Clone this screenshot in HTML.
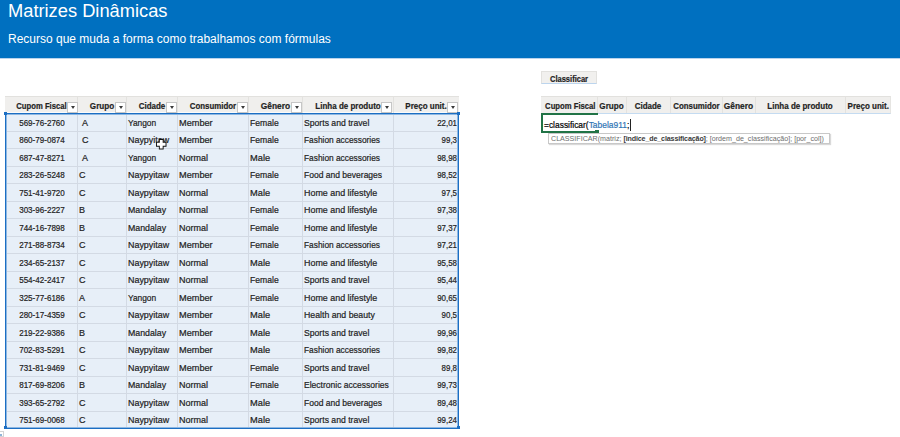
<!DOCTYPE html><html><head><meta charset="utf-8"><style>
html,body{margin:0;padding:0;}
body{width:900px;height:437px;overflow:hidden;background:#fff;position:relative;font-family:"Liberation Sans",sans-serif;}
div,span{position:absolute;box-sizing:border-box;}
.t{white-space:nowrap;color:#222;font-size:9px;line-height:10px;-webkit-text-stroke:0.2px;}
.l{transform-origin:0 0;}
.c{transform-origin:50% 0;text-align:center;}
.r{transform-origin:100% 0;text-align:right;}
.h{font-weight:bold;}
.dd{width:11px;height:11px;background:#fff;border:1px solid #c6c6c6;}
.dd:after{content:"";position:absolute;left:2.5px;top:3px;border-left:2.5px solid transparent;border-right:2.5px solid transparent;border-top:3px solid #3a3a3a;}
</style></head><body>

<div style="left:0;top:0;width:900px;height:58px;background:#0070c0;"></div>
<div style="left:0;top:58px;width:900px;height:1px;background:#b9d3ec;"></div>
<span class="t l" style="left:8px;top:0px;font-size:18.3px;line-height:22px;color:#fff;-webkit-text-stroke:0;">Matrizes Dinâmicas</span>
<span class="t l" style="left:8px;top:32px;font-size:12px;line-height:14px;color:#fff;-webkit-text-stroke:0;">Recurso que muda a forma como trabalhamos com fórmulas</span>
<div style="left:5px;top:96px;width:454px;height:17px;background:#f0efed;border-top:1px solid #e2e1de;border-bottom:1px solid #fafafa;"></div>
<div style="left:77px;top:96px;width:1px;height:17px;background:#e3e2df;"></div>
<div style="left:126px;top:96px;width:1px;height:17px;background:#e3e2df;"></div>
<div style="left:177px;top:96px;width:1px;height:17px;background:#e3e2df;"></div>
<div style="left:248px;top:96px;width:1px;height:17px;background:#e3e2df;"></div>
<div style="left:302px;top:96px;width:1px;height:17px;background:#e3e2df;"></div>
<div style="left:393px;top:96px;width:1px;height:17px;background:#e3e2df;"></div>
<div style="left:5px;top:113px;width:453px;height:315px;background:#e7eff8;"></div>
<div style="left:5px;top:131px;width:453px;height:1px;background:#d3dae4;"></div>
<div style="left:5px;top:148px;width:453px;height:1px;background:#d3dae4;"></div>
<div style="left:5px;top:166px;width:453px;height:1px;background:#d3dae4;"></div>
<div style="left:5px;top:183px;width:453px;height:1px;background:#d3dae4;"></div>
<div style="left:5px;top:201px;width:453px;height:1px;background:#d3dae4;"></div>
<div style="left:5px;top:218px;width:453px;height:1px;background:#d3dae4;"></div>
<div style="left:5px;top:236px;width:453px;height:1px;background:#d3dae4;"></div>
<div style="left:5px;top:253px;width:453px;height:1px;background:#d3dae4;"></div>
<div style="left:5px;top:271px;width:453px;height:1px;background:#d3dae4;"></div>
<div style="left:5px;top:288px;width:453px;height:1px;background:#d3dae4;"></div>
<div style="left:5px;top:306px;width:453px;height:1px;background:#d3dae4;"></div>
<div style="left:5px;top:323px;width:453px;height:1px;background:#d3dae4;"></div>
<div style="left:5px;top:341px;width:453px;height:1px;background:#d3dae4;"></div>
<div style="left:5px;top:358px;width:453px;height:1px;background:#d3dae4;"></div>
<div style="left:5px;top:376px;width:453px;height:1px;background:#d3dae4;"></div>
<div style="left:5px;top:393px;width:453px;height:1px;background:#d3dae4;"></div>
<div style="left:5px;top:411px;width:453px;height:1px;background:#d3dae4;"></div>
<div style="left:77px;top:113px;width:1px;height:315px;background:#d3dae4;"></div>
<div style="left:126px;top:113px;width:1px;height:315px;background:#d3dae4;"></div>
<div style="left:177px;top:113px;width:1px;height:315px;background:#d3dae4;"></div>
<div style="left:248px;top:113px;width:1px;height:315px;background:#d3dae4;"></div>
<div style="left:302px;top:113px;width:1px;height:315px;background:#d3dae4;"></div>
<div style="left:393px;top:113px;width:1px;height:315px;background:#d3dae4;"></div>
<div class="t h c" style="left:5px;top:101px;width:72px;transform:translateX(.5px) scaleX(0.853);">Cupom Fiscal</div>
<div class="dd" style="left:67px;top:102px;"></div>
<div class="t h c" style="left:77px;top:101px;width:49px;transform:translateX(.5px) scaleX(0.9);">Grupo</div>
<div class="dd" style="left:115px;top:102px;"></div>
<div class="t h c" style="left:126px;top:101px;width:51px;transform:translateX(.5px) scaleX(0.887);">Cidade</div>
<div class="dd" style="left:166px;top:102px;"></div>
<div class="t h c" style="left:177px;top:101px;width:71px;transform:translateX(.5px) scaleX(0.875);">Consumidor</div>
<div class="dd" style="left:237px;top:102px;"></div>
<div class="t h c" style="left:248px;top:101px;width:54px;transform:translateX(.5px) scaleX(0.932);">Gênero</div>
<div class="dd" style="left:291px;top:102px;"></div>
<div class="t h c" style="left:302px;top:101px;width:91px;transform:translateX(.5px) scaleX(0.89);">Linha de produto</div>
<div class="dd" style="left:381px;top:102px;"></div>
<div class="t h c" style="left:393px;top:101px;width:65px;transform:translateX(.5px) scaleX(0.889);">Preço unit.</div>
<div class="dd" style="left:447px;top:102px;"></div>
<div class="t c" style="left:6px;top:118px;width:72px;transform:scaleX(0.894);">569-76-2760</div>
<span class="t l" style="left:82px;top:118px;transform:scaleX(1);">A</span>
<span class="t l" style="left:128px;top:118px;transform:scaleX(0.927);">Yangon</span>
<span class="t l" style="left:179px;top:118px;transform:scaleX(1.02);">Member</span>
<span class="t l" style="left:250px;top:118px;transform:scaleX(0.955);">Female</span>
<span class="t l" style="left:304px;top:118px;transform:scaleX(0.96);">Sports and travel</span>
<div class="t r" style="left:393px;top:118px;width:64px;transform:scaleX(0.88);">22,01</div>
<div class="t c" style="left:6px;top:135px;width:72px;transform:scaleX(0.894);">860-79-0874</div>
<span class="t l" style="left:82px;top:135px;transform:scaleX(1);">C</span>
<span class="t l" style="left:128px;top:135px;transform:scaleX(0.99);">Naypyitaw</span>
<span class="t l" style="left:179px;top:135px;transform:scaleX(1.02);">Member</span>
<span class="t l" style="left:250px;top:135px;transform:scaleX(0.955);">Female</span>
<span class="t l" style="left:304px;top:135px;transform:scaleX(0.926);">Fashion accessories</span>
<div class="t r" style="left:393px;top:135px;width:64px;transform:scaleX(0.88);">99,3</div>
<div class="t c" style="left:6px;top:153px;width:72px;transform:scaleX(0.894);">687-47-8271</div>
<span class="t l" style="left:82px;top:153px;transform:scaleX(1);">A</span>
<span class="t l" style="left:128px;top:153px;transform:scaleX(0.927);">Yangon</span>
<span class="t l" style="left:179px;top:153px;transform:scaleX(1.0);">Normal</span>
<span class="t l" style="left:250px;top:153px;transform:scaleX(1.03);">Male</span>
<span class="t l" style="left:304px;top:153px;transform:scaleX(0.926);">Fashion accessories</span>
<div class="t r" style="left:393px;top:153px;width:64px;transform:scaleX(0.88);">98,98</div>
<div class="t c" style="left:6px;top:170px;width:72px;transform:scaleX(0.894);">283-26-5248</div>
<span class="t l" style="left:79px;top:170px;transform:scaleX(1);">C</span>
<span class="t l" style="left:128px;top:170px;transform:scaleX(0.99);">Naypyitaw</span>
<span class="t l" style="left:179px;top:170px;transform:scaleX(1.02);">Member</span>
<span class="t l" style="left:250px;top:170px;transform:scaleX(0.955);">Female</span>
<span class="t l" style="left:304px;top:170px;transform:scaleX(0.946);">Food and beverages</span>
<div class="t r" style="left:393px;top:170px;width:64px;transform:scaleX(0.88);">98,52</div>
<div class="t c" style="left:6px;top:188px;width:72px;transform:scaleX(0.894);">751-41-9720</div>
<span class="t l" style="left:79px;top:188px;transform:scaleX(1);">C</span>
<span class="t l" style="left:128px;top:188px;transform:scaleX(0.99);">Naypyitaw</span>
<span class="t l" style="left:179px;top:188px;transform:scaleX(1.0);">Normal</span>
<span class="t l" style="left:250px;top:188px;transform:scaleX(1.03);">Male</span>
<span class="t l" style="left:304px;top:188px;transform:scaleX(0.99);">Home and lifestyle</span>
<div class="t r" style="left:393px;top:188px;width:64px;transform:scaleX(0.88);">97,5</div>
<div class="t c" style="left:6px;top:205px;width:72px;transform:scaleX(0.894);">303-96-2227</div>
<span class="t l" style="left:79px;top:205px;transform:scaleX(1);">B</span>
<span class="t l" style="left:128px;top:205px;transform:scaleX(0.976);">Mandalay</span>
<span class="t l" style="left:179px;top:205px;transform:scaleX(1.0);">Normal</span>
<span class="t l" style="left:250px;top:205px;transform:scaleX(0.955);">Female</span>
<span class="t l" style="left:304px;top:205px;transform:scaleX(0.99);">Home and lifestyle</span>
<div class="t r" style="left:393px;top:205px;width:64px;transform:scaleX(0.88);">97,38</div>
<div class="t c" style="left:6px;top:223px;width:72px;transform:scaleX(0.894);">744-16-7898</div>
<span class="t l" style="left:79px;top:223px;transform:scaleX(1);">B</span>
<span class="t l" style="left:128px;top:223px;transform:scaleX(0.976);">Mandalay</span>
<span class="t l" style="left:179px;top:223px;transform:scaleX(1.0);">Normal</span>
<span class="t l" style="left:250px;top:223px;transform:scaleX(0.955);">Female</span>
<span class="t l" style="left:304px;top:223px;transform:scaleX(0.99);">Home and lifestyle</span>
<div class="t r" style="left:393px;top:223px;width:64px;transform:scaleX(0.88);">97,37</div>
<div class="t c" style="left:6px;top:240px;width:72px;transform:scaleX(0.894);">271-88-8734</div>
<span class="t l" style="left:79px;top:240px;transform:scaleX(1);">C</span>
<span class="t l" style="left:128px;top:240px;transform:scaleX(0.99);">Naypyitaw</span>
<span class="t l" style="left:179px;top:240px;transform:scaleX(1.02);">Member</span>
<span class="t l" style="left:250px;top:240px;transform:scaleX(0.955);">Female</span>
<span class="t l" style="left:304px;top:240px;transform:scaleX(0.926);">Fashion accessories</span>
<div class="t r" style="left:393px;top:240px;width:64px;transform:scaleX(0.88);">97,21</div>
<div class="t c" style="left:6px;top:258px;width:72px;transform:scaleX(0.894);">234-65-2137</div>
<span class="t l" style="left:79px;top:258px;transform:scaleX(1);">C</span>
<span class="t l" style="left:128px;top:258px;transform:scaleX(0.99);">Naypyitaw</span>
<span class="t l" style="left:179px;top:258px;transform:scaleX(1.0);">Normal</span>
<span class="t l" style="left:250px;top:258px;transform:scaleX(1.03);">Male</span>
<span class="t l" style="left:304px;top:258px;transform:scaleX(0.99);">Home and lifestyle</span>
<div class="t r" style="left:393px;top:258px;width:64px;transform:scaleX(0.88);">95,58</div>
<div class="t c" style="left:6px;top:275px;width:72px;transform:scaleX(0.894);">554-42-2417</div>
<span class="t l" style="left:79px;top:275px;transform:scaleX(1);">C</span>
<span class="t l" style="left:128px;top:275px;transform:scaleX(0.99);">Naypyitaw</span>
<span class="t l" style="left:179px;top:275px;transform:scaleX(1.0);">Normal</span>
<span class="t l" style="left:250px;top:275px;transform:scaleX(0.955);">Female</span>
<span class="t l" style="left:304px;top:275px;transform:scaleX(0.96);">Sports and travel</span>
<div class="t r" style="left:393px;top:275px;width:64px;transform:scaleX(0.88);">95,44</div>
<div class="t c" style="left:6px;top:293px;width:72px;transform:scaleX(0.894);">325-77-6186</div>
<span class="t l" style="left:79px;top:293px;transform:scaleX(1);">A</span>
<span class="t l" style="left:128px;top:293px;transform:scaleX(0.927);">Yangon</span>
<span class="t l" style="left:179px;top:293px;transform:scaleX(1.02);">Member</span>
<span class="t l" style="left:250px;top:293px;transform:scaleX(0.955);">Female</span>
<span class="t l" style="left:304px;top:293px;transform:scaleX(0.99);">Home and lifestyle</span>
<div class="t r" style="left:393px;top:293px;width:64px;transform:scaleX(0.88);">90,65</div>
<div class="t c" style="left:6px;top:310px;width:72px;transform:scaleX(0.894);">280-17-4359</div>
<span class="t l" style="left:79px;top:310px;transform:scaleX(1);">C</span>
<span class="t l" style="left:128px;top:310px;transform:scaleX(0.99);">Naypyitaw</span>
<span class="t l" style="left:179px;top:310px;transform:scaleX(1.02);">Member</span>
<span class="t l" style="left:250px;top:310px;transform:scaleX(1.03);">Male</span>
<span class="t l" style="left:304px;top:310px;transform:scaleX(0.97);">Health and beauty</span>
<div class="t r" style="left:393px;top:310px;width:64px;transform:scaleX(0.88);">90,5</div>
<div class="t c" style="left:6px;top:328px;width:72px;transform:scaleX(0.894);">219-22-9386</div>
<span class="t l" style="left:79px;top:328px;transform:scaleX(1);">B</span>
<span class="t l" style="left:128px;top:328px;transform:scaleX(0.976);">Mandalay</span>
<span class="t l" style="left:179px;top:328px;transform:scaleX(1.02);">Member</span>
<span class="t l" style="left:250px;top:328px;transform:scaleX(1.03);">Male</span>
<span class="t l" style="left:304px;top:328px;transform:scaleX(0.96);">Sports and travel</span>
<div class="t r" style="left:393px;top:328px;width:64px;transform:scaleX(0.88);">99,96</div>
<div class="t c" style="left:6px;top:345px;width:72px;transform:scaleX(0.894);">702-83-5291</div>
<span class="t l" style="left:79px;top:345px;transform:scaleX(1);">C</span>
<span class="t l" style="left:128px;top:345px;transform:scaleX(0.99);">Naypyitaw</span>
<span class="t l" style="left:179px;top:345px;transform:scaleX(1.02);">Member</span>
<span class="t l" style="left:250px;top:345px;transform:scaleX(1.03);">Male</span>
<span class="t l" style="left:304px;top:345px;transform:scaleX(0.926);">Fashion accessories</span>
<div class="t r" style="left:393px;top:345px;width:64px;transform:scaleX(0.88);">99,82</div>
<div class="t c" style="left:6px;top:363px;width:72px;transform:scaleX(0.894);">731-81-9469</div>
<span class="t l" style="left:79px;top:363px;transform:scaleX(1);">C</span>
<span class="t l" style="left:128px;top:363px;transform:scaleX(0.99);">Naypyitaw</span>
<span class="t l" style="left:179px;top:363px;transform:scaleX(1.02);">Member</span>
<span class="t l" style="left:250px;top:363px;transform:scaleX(0.955);">Female</span>
<span class="t l" style="left:304px;top:363px;transform:scaleX(0.96);">Sports and travel</span>
<div class="t r" style="left:393px;top:363px;width:64px;transform:scaleX(0.88);">89,8</div>
<div class="t c" style="left:6px;top:380px;width:72px;transform:scaleX(0.894);">817-69-8206</div>
<span class="t l" style="left:79px;top:380px;transform:scaleX(1);">B</span>
<span class="t l" style="left:128px;top:380px;transform:scaleX(0.976);">Mandalay</span>
<span class="t l" style="left:179px;top:380px;transform:scaleX(1.0);">Normal</span>
<span class="t l" style="left:250px;top:380px;transform:scaleX(0.955);">Female</span>
<span class="t l" style="left:304px;top:380px;transform:scaleX(0.947);">Electronic accessories</span>
<div class="t r" style="left:393px;top:380px;width:64px;transform:scaleX(0.88);">99,73</div>
<div class="t c" style="left:6px;top:398px;width:72px;transform:scaleX(0.894);">393-65-2792</div>
<span class="t l" style="left:79px;top:398px;transform:scaleX(1);">C</span>
<span class="t l" style="left:128px;top:398px;transform:scaleX(0.99);">Naypyitaw</span>
<span class="t l" style="left:179px;top:398px;transform:scaleX(1.0);">Normal</span>
<span class="t l" style="left:250px;top:398px;transform:scaleX(1.03);">Male</span>
<span class="t l" style="left:304px;top:398px;transform:scaleX(0.946);">Food and beverages</span>
<div class="t r" style="left:393px;top:398px;width:64px;transform:scaleX(0.88);">89,48</div>
<div class="t c" style="left:6px;top:415px;width:72px;transform:scaleX(0.894);">751-69-0068</div>
<span class="t l" style="left:79px;top:415px;transform:scaleX(1);">C</span>
<span class="t l" style="left:128px;top:415px;transform:scaleX(0.99);">Naypyitaw</span>
<span class="t l" style="left:179px;top:415px;transform:scaleX(1.0);">Normal</span>
<span class="t l" style="left:250px;top:415px;transform:scaleX(1.03);">Male</span>
<span class="t l" style="left:304px;top:415px;transform:scaleX(0.96);">Sports and travel</span>
<div class="t r" style="left:393px;top:415px;width:64px;transform:scaleX(0.88);">99,24</div>
<div style="left:5px;top:113px;width:454px;height:1px;background:#1b6ec3;"></div>
<div style="left:6px;top:114px;width:452px;height:1px;background:#8db7e2;"></div>
<div style="left:5px;top:427px;width:454px;height:1px;background:#8db7e2;"></div>
<div style="left:5px;top:428px;width:454px;height:1px;background:#1b6ec3;"></div>
<div style="left:5px;top:113px;width:1px;height:316px;background:#1b6ec3;"></div>
<div style="left:6px;top:114px;width:1px;height:313px;background:#8db7e2;"></div>
<div style="left:458px;top:113px;width:1px;height:316px;background:#1b6ec3;"></div>
<div style="left:457px;top:114px;width:1px;height:313px;background:#8db7e2;"></div>
<div style="left:4px;top:112px;width:3px;height:3px;background:#1b6ec3;"></div>
<div style="left:457px;top:112px;width:3px;height:3px;background:#1b6ec3;"></div>
<div style="left:4px;top:426px;width:3px;height:3px;background:#1b6ec3;"></div>
<div style="left:457px;top:426px;width:3px;height:3px;background:#1b6ec3;"></div>
<svg style="position:absolute;left:156px;top:139px;" width="10.5" height="10.5" viewBox="0 0 11 11"><path d="M3 0h5v3h3v5h-3v3h-5v-3h-3v-5h3z" fill="#111"/><path d="M4 1h3v3h3v3h-3v3h-3v-3h-3v-3h3z" fill="#fff"/></svg>
<div style="left:541px;top:71px;width:56px;height:13px;background:#f1f0ee;border:1px solid #e2e1de;border-bottom:1px solid #bcd5ee;"></div>
<div class="t h c" style="left:541px;top:73.5px;width:56px;transform:scaleX(.837);">Classificar</div>
<div style="left:541px;top:96px;width:350px;height:18px;background:#f0efed;border-top:1px solid #e2e1de;border-right:1px solid #e6e5e2;border-bottom:1px solid #c4dbf1;"></div>
<div style="left:597px;top:96px;width:1px;height:17px;background:#e3e2df;"></div>
<div style="left:626px;top:96px;width:1px;height:17px;background:#e3e2df;"></div>
<div style="left:670px;top:96px;width:1px;height:17px;background:#e3e2df;"></div>
<div style="left:722px;top:96px;width:1px;height:17px;background:#e3e2df;"></div>
<div style="left:755px;top:96px;width:1px;height:17px;background:#e3e2df;"></div>
<div style="left:845px;top:96px;width:1px;height:17px;background:#e3e2df;"></div>
<div class="t h c" style="left:541px;top:101px;width:56px;transform:scaleX(0.853);">Cupom Fiscal</div>
<div class="t h c" style="left:597px;top:101px;width:29px;transform:scaleX(0.9);">Grupo</div>
<div class="t h c" style="left:626px;top:101px;width:44px;transform:scaleX(0.887);">Cidade</div>
<div class="t h c" style="left:670px;top:101px;width:52px;transform:scaleX(0.875);">Consumidor</div>
<div class="t h c" style="left:722px;top:101px;width:33px;transform:scaleX(0.932);">Gênero</div>
<div class="t h c" style="left:755px;top:101px;width:90px;transform:scaleX(0.89);">Linha de produto</div>
<div class="t h c" style="left:845px;top:101px;width:46px;transform:scaleX(0.889);">Preço unit.</div>
<div style="left:541px;top:113px;width:57px;height:20px;border:2px solid #217346;border-right:none;"></div>
<div style="left:595px;top:130px;width:4px;height:3px;background:#217346;"></div>
<div style="left:0px;top:431px;width:4px;height:6px;border:1px solid #d4d4d4;border-left:none;background:#fff;"></div>
<div style="left:0px;top:434px;width:2px;height:2px;background:#8fb4d9;"></div>
<span class="t l" style="left:544px;top:120px;color:#000;transform:scaleX(.935);">=classificar(<span style="position:static;color:#2f75b5;">Tabela911</span>;</span>
<div style="left:630px;top:119px;width:1px;height:12px;background:#222;"></div>
<div style="left:548px;top:133px;width:282px;height:11px;background:#fff;border:1px solid #c8c8c8;box-shadow:1px 1px 1px rgba(0,0,0,.15);"></div>
<span class="t l" style="left:551px;top:133.5px;font-size:7.5px;color:#6e6e6e;-webkit-text-stroke:0;transform:scaleX(.95);">CLASSIFICAR(matriz; <b style="color:#3a3a3a;font-weight:bold;letter-spacing:-0.15px;">[indice_de_classificação]</b>; [ordem_de_classificação]; [por_col])</span>
</body></html>
